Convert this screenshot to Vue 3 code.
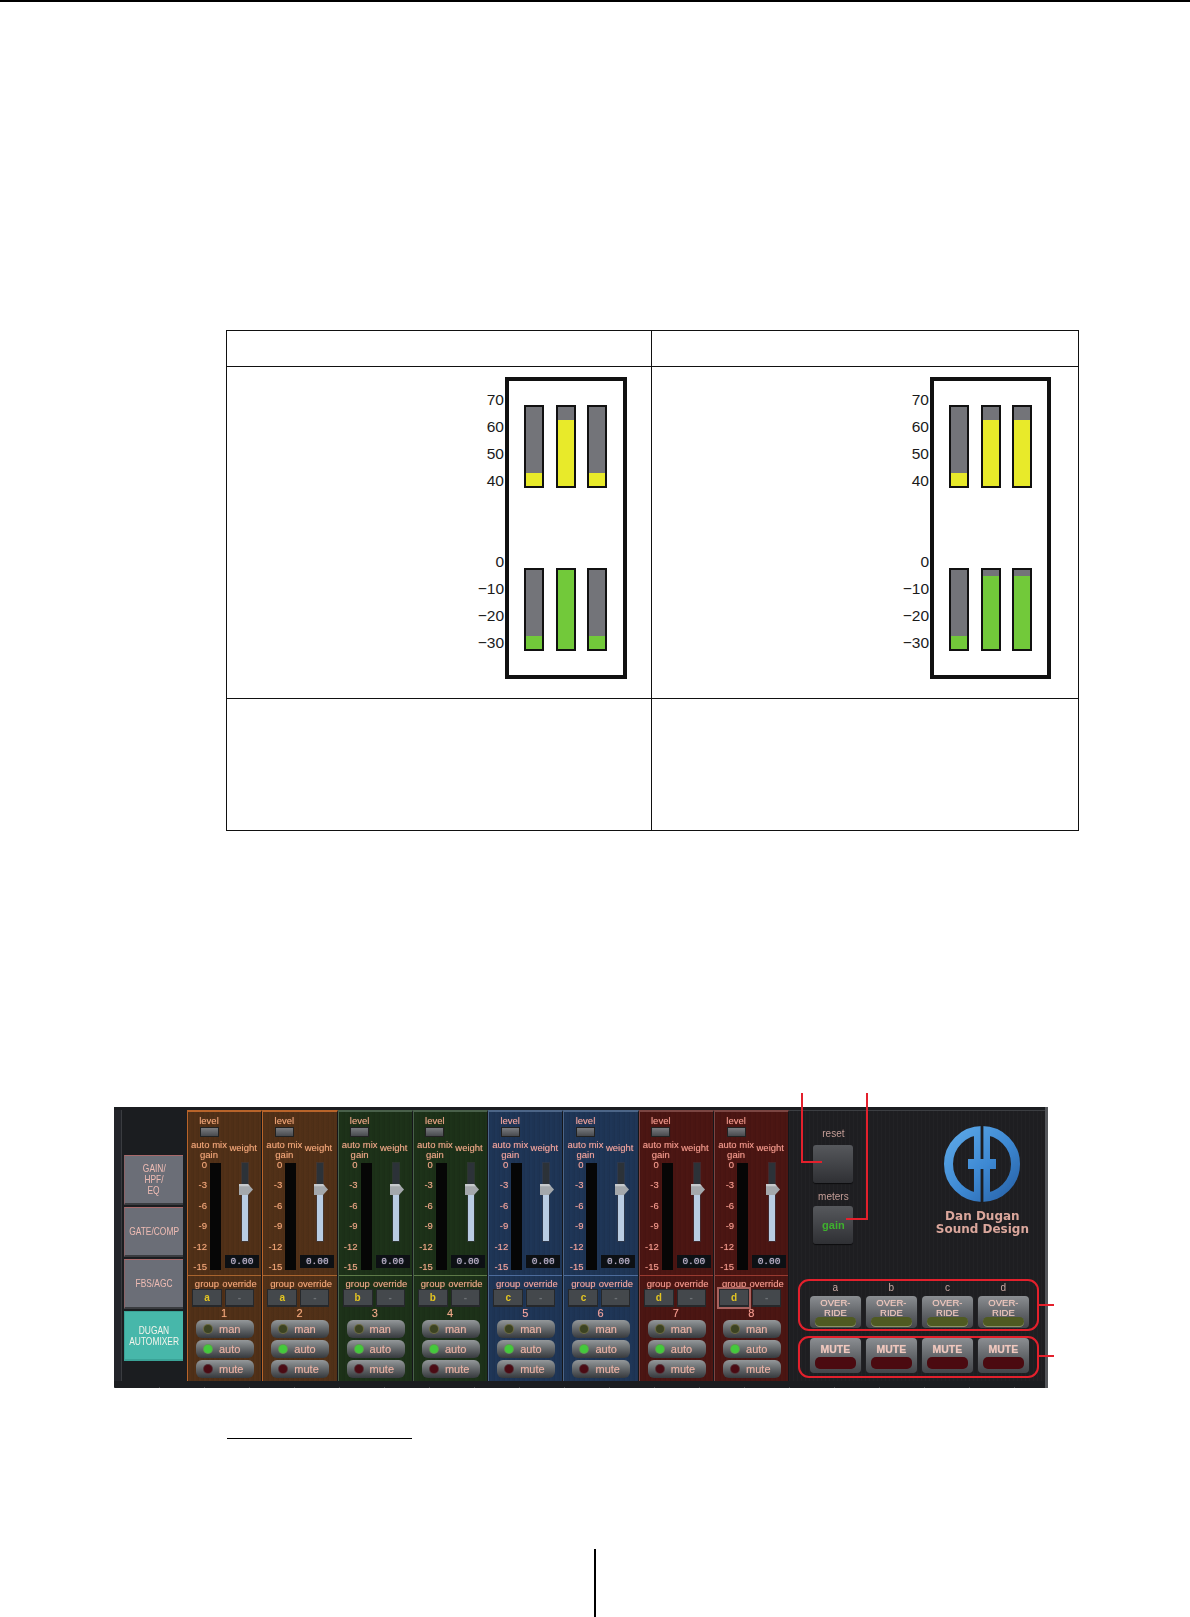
<script setup>
const charts = [
  {
    id: 'left',
    top: [17, 84, 17],
    bottom: [17, 100, 17]
  },
  {
    id: 'right',
    top: [17, 84, 84],
    bottom: [17, 92, 92]
  }
]

const scaleTop = ['70', '60', '50', '40']
const scaleBottom = ['0', '−10', '−20', '−30']

const tabs = [
  { id: 'gain', lines: ['GAIN/', 'HPF/', 'EQ'] },
  { id: 'gate', lines: ['GATE/COMP'] },
  { id: 'fbs', lines: ['FBS/AGC'] },
  { id: 'dugan', lines: ['DUGAN', 'AUTOMIXER'], active: true }
]

const channels = [
  { n: 1, tone: 'brown', group: 'a' },
  { n: 2, tone: 'brown', group: 'a' },
  { n: 3, tone: 'green', group: 'b' },
  { n: 4, tone: 'green', group: 'b' },
  { n: 5, tone: 'blue', group: 'c' },
  { n: 6, tone: 'blue', group: 'c' },
  { n: 7, tone: 'red', group: 'd' },
  { n: 8, tone: 'red', group: 'd', selected: true }
]

const gainScale = ['0', '-3', '-6', '-9', '-12', '-15']
const modes = ['man', 'auto', 'mute']
const groups = ['a', 'b', 'c', 'd']
</script>

<template>
  <div class="page">
    <div class="table">
      <div class="cell head"></div>
      <div class="cell head"></div>

      <div v-for="chart in charts" :key="chart.id" :class="['cell', 'meter-cell', chart.id]">
        <div class="scale">
          <div class="scale-set">
            <span v-for="s in scaleTop" :key="s">{{ s }}</span>
          </div>
          <div class="scale-set second">
            <span v-for="s in scaleBottom" :key="s">{{ s }}</span>
          </div>
        </div>
        <div class="meter-box">
          <div class="bars">
            <div v-for="(h, i) in chart.top" :key="i" class="bar">
              <div class="fill yellow" :style="{ height: h + '%' }"></div>
            </div>
          </div>
          <div class="bars second">
            <div v-for="(h, i) in chart.bottom" :key="i" class="bar">
              <div class="fill lime" :style="{ height: h + '%' }"></div>
            </div>
          </div>
        </div>
      </div>

      <div class="cell foot"></div>
      <div class="cell foot"></div>
    </div>

    <div class="mixer-wrap">
      <div class="mixer">
        <div class="mixer-main">
          <div class="rail">
            <div v-for="tab in tabs" :key="tab.id" :class="['tab', { active: tab.active }]">
              <span v-for="line in tab.lines" :key="line">{{ line }}</span>
            </div>
          </div>

          <div v-for="ch in channels" :key="ch.n" :class="['channel', ch.tone]">
            <div class="ch-top">
              <div class="gain-col">
                <div class="gain-head">
                  <span class="lbl">level</span>
                  <span class="level-led"></span>
                  <span class="lbl mix">auto mix</span>
                  <span class="lbl">gain</span>
                </div>
                <div class="gain-row">
                  <div class="gain-scale">
                    <span v-for="g in gainScale" :key="g">{{ g }}</span>
                  </div>
                  <div class="gain-meter"></div>
                </div>
              </div>
              <div class="weight-col">
                <span class="lbl">weight</span>
                <div class="slider">
                  <svg class="thumb" width="14" height="11" viewBox="0 0 14 11">
                    <path d="M0 0H9L14 5.5L9 11H0Z" fill="#a4a8ac" />
                    <path d="M0 0H9L11 2.2H0Z" fill="#c6c9cc" />
                  </svg>
                </div>
                <div class="value">0.00</div>
              </div>
            </div>

            <div class="ch-bottom">
              <div class="assign">
                <span class="lbl">group</span>
                <span class="lbl">override</span>
                <div :class="['assign-btn', 'letter', { selected: ch.selected }]">{{ ch.group }}</div>
                <div class="assign-btn dash">-</div>
              </div>
              <div class="ch-num">{{ ch.n }}</div>
              <div class="modes">
                <div v-for="m in modes" :key="m" class="mode-btn">
                  <span :class="['led', m]"></span>
                  <span>{{ m }}</span>
                </div>
              </div>
            </div>
          </div>

          <div class="panel">
            <div class="panel-top">
              <div class="panel-keys">
                <span class="key-lbl">reset</span>
                <div class="key"></div>
                <span class="key-lbl meters">meters</span>
                <div class="key gain">gain</div>
              </div>
              <div class="brand">
                <svg width="78" height="78" viewBox="-39 -39 78 78">
                  <defs>
                    <linearGradient id="logoBlue" gradientUnits="userSpaceOnUse" x1="-30" y1="-30" x2="30" y2="30">
                      <stop offset="0" stop-color="#5aa6e6" />
                      <stop offset="0.55" stop-color="#3d88d2" />
                      <stop offset="1" stop-color="#2a66ac" />
                    </linearGradient>
                  </defs>
                  <circle r="33.5" fill="none" stroke="url(#logoBlue)" stroke-width="9" />
                  <rect x="-8" y="-36" width="16" height="72" fill="url(#logoBlue)" />
                  <rect x="-14" y="-5" width="28" height="10" fill="url(#logoBlue)" />
                  <rect x="-1.4" y="-39" width="2.8" height="34" fill="#1d1d20" />
                  <rect x="-1.4" y="5" width="2.8" height="34" fill="#1d1d20" />
                </svg>
                <div class="brand-name">Dan Dugan<br />Sound Design</div>
              </div>
            </div>

            <div class="red-box override-box">
              <div class="ovr-grid">
                <span v-for="g in groups" :key="g" class="ovr-lbl">{{ g }}</span>
                <div v-for="g in groups" :key="g + 'o'" class="big-btn ovr">
                  <span>OVER-<br />RIDE</span>
                  <i class="bar-led olive"></i>
                </div>
              </div>
            </div>

            <div class="red-box mute-box">
              <div class="mute-row">
                <div v-for="g in groups" :key="g" class="big-btn mute">
                  <span>MUTE</span>
                  <i class="bar-led maroon"></i>
                </div>
              </div>
            </div>
          </div>
        </div>
        <div class="mixer-foot"></div>
      </div>

      <div class="leader reset-line"></div>
      <div class="leader meters-line"></div>
      <div class="tick tick-a"></div>
      <div class="tick tick-b"></div>
    </div>

    <div class="note-rule"></div>
    <div class="gutter-line"></div>
  </div>
</template>

<style scoped>
.page {
  width: 1190px;
  height: 1617px;
  border-top: 2px solid #000;
  box-sizing: border-box;
  font-family: "Liberation Sans", Arial, sans-serif;
  background: #fff;
  overflow: hidden;
}

.table {
  display: grid;
  grid-template-columns: 425px 427px;
  grid-template-rows: 36px 332px 132px;
  width: 852px;
  margin: 328px 0 0 226px;
  border-top: 1px solid #111;
  border-left: 1px solid #111;
}

.cell {
  border-right: 1px solid #111;
  border-bottom: 1px solid #111;
}

.meter-cell {
  display: flex;
  justify-content: flex-end;
  padding-top: 10px;
}

.meter-cell.left {
  padding-right: 24px;
}

.meter-cell.right {
  padding-right: 27px;
}

.scale {
  padding: 9px 1px 0 0;
  font-size: 15.5px;
  color: #1a1a1a;
  text-align: right;
}

.scale-set span {
  display: block;
  height: 27px;
  line-height: 27px;
}

.scale-set.second {
  margin-top: 54px;
}

.meter-box {
  width: 122px;
  height: 302px;
  box-sizing: border-box;
  border: 4px solid #111;
  padding: 24px 0 0 15px;
}

.meter-cell.right .meter-box {
  width: 121px;
}

.bars {
  display: flex;
  gap: 11.5px;
}

.bars.second {
  margin-top: 80px;
}

.bar {
  display: flex;
  align-items: flex-end;
  width: 20px;
  height: 83px;
  box-sizing: border-box;
  border: 2px solid #111;
  background: #737479;
}

.fill {
  width: 100%;
}

.yellow {
  background: #e8ea2a;
}

.lime {
  background: #72c93a;
}

.mixer-wrap {
  position: relative;
  width: 934px;
  margin: 276px 0 0 114px;
}

.mixer {
  height: 281px;
  padding-top: 3px;
  box-sizing: border-box;
  background: #1b1d20;
  border-right: 3px solid #55575b;
  filter: blur(0.35px);
}

.mixer-main {
  display: flex;
  height: 271px;
}

.mixer-foot {
  height: 7px;
  background:
    repeating-linear-gradient(90deg, #4a4c50 0 1px, transparent 1px 45px) 0 6px / 100% 1px no-repeat,
    #1b1d20;
}

.rail {
  flex: none;
  display: flex;
  flex-direction: column;
  gap: 2px;
  width: 73px;
  box-sizing: border-box;
  padding: 45px 4px 0 10px;
  background: linear-gradient(90deg, #23252a 0 7px, #3a3c40 7px 8px, #1b1d20 8px);
}

.tab {
  display: flex;
  flex-direction: column;
  align-items: center;
  justify-content: center;
  height: 50px;
  box-sizing: border-box;
  border-top: 1px solid #a8696a;
  border-left: 1px solid #8a6468;
  border-bottom: 2px solid #3a3c40;
  background: #6b6e77;
  color: #efbcb4;
  font-size: 10.5px;
  line-height: 11px;
}

.tab span {
  white-space: nowrap;
  transform: scaleX(0.8);
}

.tab.active {
  border-color: #3aa397;
  background: #47b7aa;
  color: #f4f4ec;
}

.channel {
  flex: none;
  width: 75.3px;
  box-sizing: border-box;
  border-top: 2px solid var(--edge);
  border-left: 1px solid var(--edge);
  border-right: 1px solid #15161a;
  color: var(--ink);
  text-shadow: 0 0 1px rgba(255, 170, 140, 0.45);
  background:
    repeating-linear-gradient(90deg, rgba(0, 0, 0, 0.07) 0 1px, transparent 1px 3px, rgba(0, 0, 0, 0.03) 3px 5px),
    var(--wood);
}

.channel.brown {
  --wood: #523118;
  --edge: #b9642a;
  --rule: #a8642e;
  --ink: #f4a878;
}

.channel.green {
  --wood: #1d3219;
  --edge: #49604a;
  --rule: #5d7a48;
  --ink: #eea888;
}

.channel.blue {
  --wood: #1f3657;
  --edge: #4c6587;
  --rule: #4d6c9c;
  --ink: #f4a4a0;
}

.channel.red {
  --wood: #4c1613;
  --edge: #7b4542;
  --rule: #993a30;
  --ink: #f69a90;
}

.ch-top {
  display: flex;
  height: 163px;
  border-bottom: 1px solid var(--rule);
}

.lbl {
  display: flex;
  justify-content: center;
  white-space: nowrap;
  font-size: 9.5px;
  line-height: 10px;
}

.gain-col {
  width: 37px;
  padding-top: 4px;
}

.gain-head {
  display: flex;
  flex-direction: column;
  align-items: center;
  width: 42px;
}

.level-led {
  width: 19px;
  height: 10px;
  margin: 1px 0 3px;
  box-sizing: border-box;
  border: 1px solid #222;
  background: linear-gradient(#7a7c80, #484a4e);
}

.gain-row {
  display: flex;
  gap: 3px;
}

.gain-scale {
  display: flex;
  flex-direction: column;
  justify-content: space-between;
  width: 19px;
  height: 112px;
  font-size: 9.5px;
  line-height: 10px;
  text-align: right;
}

.gain-meter {
  width: 11px;
  height: 107px;
  margin-top: 3px;
  background: #060606;
}

.weight-col {
  width: 38px;
  padding-top: 31px;
}

.slider {
  position: relative;
  width: 6px;
  height: 78px;
  margin: 10px 0 0 17px;
  background: linear-gradient(#2c3238 0 26px, #b9cce2 26px);
  box-shadow: 0 0 0 1px rgba(60, 60, 70, 0.5);
}

.thumb {
  position: absolute;
  left: -3px;
  top: 21px;
}

.value {
  width: 34px;
  height: 13px;
  margin-top: 14px;
  background: #0d1014;
  color: #c6aabc;
  font-family: "Liberation Mono", monospace;
  font-size: 9.5px;
  line-height: 13px;
  text-align: center;
  text-shadow: 0 0 1px #7fb0d8;
}

.assign {
  display: grid;
  grid-template-columns: 30px 29px;
  column-gap: 3px;
  padding: 3px 0 0 4px;
}

.assign-btn {
  height: 18px;
  box-sizing: border-box;
  border: 1px solid #26282b;
  border-bottom-width: 2px;
  background: #44484c;
  text-align: center;
  font-size: 10px;
  font-weight: 700;
  line-height: 15px;
}

.assign-btn.letter {
  color: #e2c422;
  text-shadow: none;
}

.assign-btn.dash {
  color: #6c7074;
  text-shadow: none;
}

.assign-btn.selected {
  outline: 2px solid #a8625e;
}

.ch-num {
  height: 13px;
  padding-right: 1px;
  font-size: 11px;
  line-height: 13px;
  text-align: center;
}

.modes {
  display: flex;
  flex-direction: column;
  gap: 2px;
  width: 58px;
  margin-left: 8px;
}

.mode-btn {
  display: flex;
  align-items: center;
  gap: 7px;
  height: 18px;
  padding-left: 8px;
  box-sizing: border-box;
  border-radius: 6px;
  background: linear-gradient(#94989a, #686c6f 45%, #36393d);
  color: #ecb4a8;
  font-size: 11px;
  line-height: 14px;
}

.led {
  flex: none;
  width: 8px;
  height: 8px;
  border-radius: 50%;
}

.led.man {
  background: #3c4322;
  box-shadow: 0 0 0 1px #6c6a40;
}

.led.auto {
  background: #44c93c;
  box-shadow: 0 0 0 1px #5e9a50;
}

.led.mute {
  background: #4b0b14;
  box-shadow: 0 0 0 1px #54343a;
}

.panel {
  flex: none;
  width: 255.6px;
  border-top: 1px solid #3c3e42;
  box-sizing: border-box;
  background:
    repeating-linear-gradient(90deg, rgba(255, 255, 255, 0.018) 0 1px, transparent 1px 4px),
    #1e1e21;
}

.panel-top {
  display: flex;
  height: 168px;
}

.panel-keys {
  display: flex;
  flex-direction: column;
  align-items: center;
  width: 40px;
  margin-left: 24px;
  padding-top: 17px;
}

.key-lbl {
  color: #c49d96;
  font-size: 10px;
  line-height: 12px;
}

.key-lbl.meters {
  margin-top: 8px;
}

.key {
  width: 40px;
  height: 38px;
  margin-top: 5px;
  border-radius: 3px;
  background: linear-gradient(#56585c, #2f3034);
  box-shadow: 0 1px 1px #0c0c0e;
}

.key.gain {
  margin-top: 3px;
  color: #3fb02e;
  font-size: 11px;
  font-weight: 700;
  line-height: 38px;
  text-align: center;
}

.brand {
  display: flex;
  flex-direction: column;
  align-items: center;
  width: 110px;
  margin-left: 74px;
  padding-top: 14px;
}

.brand-name {
  margin-top: 7px;
  color: #dba79c;
  font-family: "DejaVu Sans", sans-serif;
  font-size: 12px;
  font-weight: 700;
  line-height: 13px;
  text-align: center;
  white-space: nowrap;
}

.red-box {
  width: 241px;
  margin-left: 9px;
  box-sizing: border-box;
  border: 2.5px solid #e3202c;
  border-radius: 11px;
}

.override-box {
  height: 52px;
  padding: 1px 0 0 9.5px;
}

.mute-box {
  height: 42px;
  margin-top: 5px;
  padding-left: 9.5px;
}

.ovr-grid {
  display: grid;
  grid-template-columns: repeat(4, 51px);
  column-gap: 5px;
}

.ovr-lbl {
  height: 14px;
  color: #c9a8a2;
  font-size: 10px;
  line-height: 12px;
  text-align: center;
}

.mute-row {
  display: flex;
  gap: 5px;
}

.big-btn {
  display: flex;
  flex-direction: column;
  align-items: center;
  justify-content: space-between;
  box-sizing: border-box;
  width: 51px;
  padding: 1px 0 2px;
  border-radius: 4px;
  background: linear-gradient(#8b8e92, #5d6064 60%, #44464a);
  color: #f0c8be;
  text-align: center;
  text-shadow: 0 0 1px rgba(255, 210, 200, 0.6);
}

.big-btn.ovr {
  height: 32px;
  padding-top: 2px;
  font-size: 9.5px;
  line-height: 9.5px;
}

.big-btn.mute {
  height: 35px;
  padding: 5px 0 4px;
  font-size: 10.5px;
  font-weight: 700;
  line-height: 12px;
}

.bar-led {
  display: block;
  width: 41px;
  border-radius: 5px;
}

.bar-led.olive {
  height: 9px;
  background: #4f5a22;
  box-shadow: 0 1px 0 #8b9468;
}

.bar-led.maroon {
  height: 12px;
  background: #4b0a10;
}

.leader {
  position: absolute;
  top: -14px;
  box-sizing: border-box;
  border-bottom: 2px solid #e3202c;
}

.reset-line {
  left: 687px;
  width: 21px;
  height: 70px;
  border-left: 2px solid #e3202c;
}

.meters-line {
  left: 732px;
  width: 22px;
  height: 127px;
  border-right: 2px solid #e3202c;
}

.tick {
  position: absolute;
  left: 925px;
  width: 15px;
  height: 2px;
  background: #e3202c;
}

.tick-a {
  top: 197px;
}

.tick-b {
  top: 248px;
}

.note-rule {
  width: 185px;
  height: 1px;
  margin: 50px 0 0 227px;
  background: #000;
}

.gutter-line {
  width: 2px;
  height: 70px;
  margin: 110px 0 0 594px;
  background: #000;
}
</style>

<style>
body {
  background: #fff;
}
</style>
